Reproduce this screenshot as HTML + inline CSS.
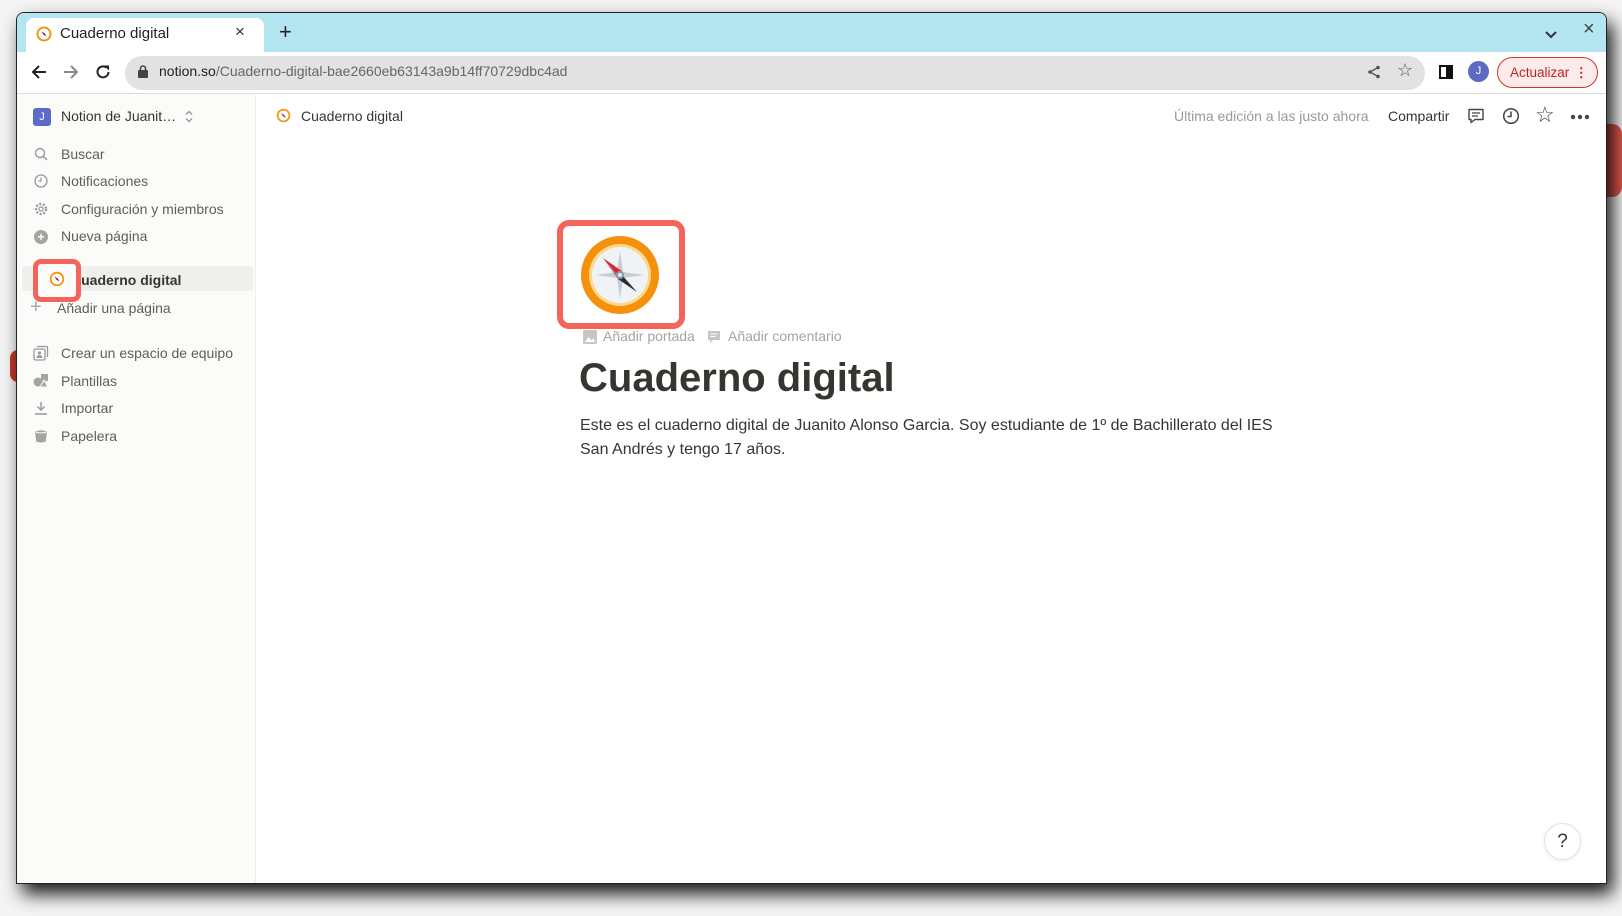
<!DOCTYPE html>
<html><head><meta charset="utf-8"><style>
*{margin:0;padding:0;box-sizing:border-box}
body{width:1622px;height:916px;background:#f4f4f4;position:relative;overflow:hidden;font-family:"Liberation Sans",sans-serif}
.a{position:absolute}
.win{left:16px;top:12px;width:1591px;height:872px;background:#fff;border:1px solid #222;border-radius:8px 8px 0 0;overflow:hidden;box-shadow:6px 10px 18px rgba(0,0,0,.9)}
.tabbar{left:0;top:0;width:100%;height:39px;background:#b4e6f1}
.tab{left:9px;top:5px;width:238px;height:34px;background:#fff;border-radius:8px 8px 0 0}
.t{white-space:nowrap}
.side{left:0;top:81px;width:239px;height:800px;background:#fbfbfa;border-right:1px solid #efefee}
.si{font-size:14px;color:#5f5e5b}
</style></head><body>
<div class="a" style="left:1607px;top:124px;width:15px;height:73px;background:#e0574b;border-radius:0 10px 10px 0"></div>
<div class="a" style="left:10px;top:350px;width:8px;height:32px;background:#c0392b;border-radius:8px 0 0 8px"></div>
<div class="a win">
 <div class="a tabbar"></div>
 <div class="a tab"></div>
 <svg class="a" style="left:19px;top:13px" width="16" height="16" viewBox="0 0 16 16"><circle cx="8" cy="8" r="6.5" fill="#fff" stroke="#f5940f" stroke-width="2"/><path d="M5.5 5.5 L8.6 7.4 L10.5 10.5 L7.4 8.6Z" fill="#333"/><path d="M5.5 5.5 L8.6 7.4 L7.4 8.6Z" fill="#d8223f"/></svg>
 <div class="a t" style="left:43px;top:12px;font-size:15px;color:#222">Cuaderno digital</div>
 <div class="a t" style="left:218px;top:9px;font-size:17px;color:#333">×</div>
 <div class="a t" style="left:262px;top:6px;font-size:22px;color:#222">+</div>
 <svg class="a" style="left:1528px;top:18px" width="12" height="8" viewBox="0 0 12 8"><path d="M1 1l5 5 5-5" stroke="#333" stroke-width="2" fill="none"/></svg>
 <div class="a t" style="left:1566px;top:5px;font-size:20px;color:#444">×</div>
 <svg class="a" style="left:13px;top:50px" width="18" height="18" viewBox="0 0 18 18"><path d="M16 9H3M9 3L3 9l6 6" stroke="#222" stroke-width="2" fill="none"/></svg>
 <svg class="a" style="left:45px;top:50px" width="18" height="18" viewBox="0 0 18 18"><path d="M2 9h13M9 3l6 6-6 6" stroke="#888" stroke-width="2" fill="none"/></svg>
 <svg class="a" style="left:77px;top:50px" width="18" height="18" viewBox="0 0 18 18"><path d="M14.5 9A5.5 5.5 0 1 1 12.5 4.6" stroke="#222" stroke-width="2" fill="none"/><path d="M10 2.5h5v5z" fill="#222"/></svg>
 <div class="a" style="left:108px;top:43px;width:1300px;height:34px;background:#e2e2e2;border-radius:17px"></div>
 <svg class="a" style="left:121px;top:52px" width="10" height="13" viewBox="0 0 10 13"><rect x="0" y="5" width="10" height="8" rx="1" fill="#444"/><path d="M2.5 5V3.5a2.5 2.5 0 0 1 5 0V5" stroke="#444" stroke-width="1.6" fill="none"/></svg>
 <div class="a t" style="left:142px;top:50px;font-size:14px;color:#222">notion.so<span style="color:#666">/Cuaderno-digital-bae2660eb63143a9b14ff70729dbc4ad</span></div>
 <svg class="a" style="left:1350px;top:52px" width="14" height="14" viewBox="0 0 14 14"><circle cx="11" cy="2.5" r="1.8" fill="#555"/><circle cx="3" cy="7" r="1.8" fill="#555"/><circle cx="11" cy="11.5" r="1.8" fill="#555"/><path d="M11 2.5L3 7l8 4.5" stroke="#555" stroke-width="1.4" fill="none"/></svg>
 <div class="a t" style="left:1380px;top:47px;font-size:18px;color:#555">☆</div>
 <div class="a" style="left:1422px;top:52px;width:14px;height:14px;border:2px solid #111;border-right:7px solid #111"></div>
 <div class="a" style="left:1451px;top:48px;width:21px;height:21px;border-radius:50%;background:#5c6bc0;color:#fff;font-size:11px;text-align:center;line-height:21px">J</div>
 <div class="a t" style="left:1480px;top:44px;width:101px;height:31px;border:1px solid #d93025;border-radius:16px;background:#fbeceb;color:#c5221f;font-size:13.5px;line-height:29px;padding-left:12px">Actualizar <span style="position:absolute;right:9px;top:0;font-weight:bold;letter-spacing:0">⋮</span></div>
 <div class="a" style="left:0;top:80px;width:100%;height:1px;background:#ddd"></div>

 <div class="a side"></div>
 <div class="a" style="left:16px;top:95px;width:18px;height:18px;border-radius:3px;background:#5a6bc8;color:#fff;font-size:11px;text-align:center;line-height:18px">J</div>
 <div class="a t" style="left:44px;top:95px;font-size:14px;color:#37352f">Notion de Juanit…</div>
 <svg class="a" style="left:167px;top:96px" width="10" height="15" viewBox="0 0 10 15"><path d="M2 5.5l3-3 3 3M2 9.5l3 3 3-3" stroke="#999" stroke-width="1.4" fill="none"/></svg>
 <svg class="a" style="left:17px;top:134px" width="14" height="14" viewBox="0 0 14 14"><circle cx="6" cy="6" r="4.5" stroke="#999" stroke-width="1.4" fill="none"/><path d="M9.3 9.3L13 13" stroke="#999" stroke-width="1.5"/></svg>
 <div class="a t si" style="left:44px;top:133px">Buscar</div>
 <svg class="a" style="left:17px;top:161px" width="14" height="14" viewBox="0 0 14 14"><circle cx="7" cy="7" r="6" stroke="#999" stroke-width="1.3" fill="none"/><path d="M7 3.5V7H4.5" stroke="#999" stroke-width="1.3" fill="none"/></svg>
 <div class="a t si" style="left:44px;top:160px">Notificaciones</div>
 <svg class="a" style="left:17px;top:189px" width="14" height="14" viewBox="0 0 14 14"><circle cx="7" cy="7" r="5" stroke="#999" stroke-width="2.4" stroke-dasharray="2 1.6" fill="none"/><circle cx="7" cy="7" r="2" stroke="#999" stroke-width="1.2" fill="none"/></svg>
 <div class="a t si" style="left:44px;top:188px">Configuración y miembros</div>
 <div class="a" style="left:17px;top:217px;width:14px;height:14px;border-radius:50%;background:#a5a4a1;color:#fff;font-size:12px;line-height:14px;text-align:center;font-weight:bold">+</div>
 <div class="a t si" style="left:44px;top:215px">Nueva página</div>

 <div class="a" style="left:5px;top:253px;width:231px;height:25px;background:#efefed;border-radius:3px"></div>
 <div class="a t" style="left:54px;top:259px;font-size:14px;color:#37352f;font-weight:bold">Cuaderno digital</div>
 <div class="a" style="left:16px;top:246px;width:48px;height:43px;border:5px solid #f4645a;border-radius:8px;background:#fbfbfa"></div>
 <svg class="a" style="left:32px;top:258px" width="16" height="16" viewBox="0 0 16 16"><circle cx="8" cy="8" r="6.3" fill="#fff" stroke="#f5940f" stroke-width="1.8"/><path d="M5.5 5.5 L8.6 7.4 L10.5 10.5 L7.4 8.6Z" fill="#333"/><path d="M5.5 5.5 L8.6 7.4 L7.4 8.6Z" fill="#d8223f"/></svg>
 <div class="a t" style="left:13px;top:283px;font-size:20px;color:#aaa">+</div>
 <div class="a t si" style="left:40px;top:287px">Añadir una página</div>

 <svg class="a" style="left:16px;top:332px" width="16" height="16" viewBox="0 0 16 16"><rect x="1" y="4" width="11" height="11" rx="1.5" stroke="#999" stroke-width="1.3" fill="none"/><path d="M4 1.5h9.5a1 1 0 0 1 1 1V12" stroke="#999" stroke-width="1.3" fill="none"/><circle cx="6.5" cy="8" r="1.6" fill="#999"/><path d="M3.5 13a3 3 0 0 1 6 0z" fill="#999"/></svg>
 <div class="a t si" style="left:44px;top:332px">Crear un espacio de equipo</div>
 <svg class="a" style="left:16px;top:360px" width="16" height="15" viewBox="0 0 16 15"><circle cx="5" cy="9" r="4.5" fill="#a5a4a1"/><path d="M8 1h7v7H8z" fill="#a5a4a1"/><path d="M11 7l4 7H7z" fill="#a5a4a1" stroke="#fbfbfa" stroke-width="1"/></svg>
 <div class="a t si" style="left:44px;top:360px">Plantillas</div>
 <svg class="a" style="left:17px;top:388px" width="14" height="14" viewBox="0 0 14 14"><path d="M7 1v8M3.5 5.5L7 9l3.5-3.5M1 13h12" stroke="#999" stroke-width="1.4" fill="none"/></svg>
 <div class="a t si" style="left:44px;top:387px">Importar</div>
 <svg class="a" style="left:17px;top:416px" width="14" height="14" viewBox="0 0 14 14"><path d="M1 2.5Q7 0 13 2.5L11.8 12.5Q7 14.5 2.2 12.5Z" fill="#a5a4a1"/><path d="M1.5 3Q7 5 12.5 3" stroke="#fbfbfa" stroke-width="1" fill="none"/></svg>
 <div class="a t si" style="left:44px;top:415px">Papelera</div>

 <!-- header -->
 <svg class="a" style="left:259px;top:95px" width="15" height="15" viewBox="0 0 16 16"><circle cx="8" cy="8" r="6.3" fill="#fff" stroke="#f5940f" stroke-width="1.8"/><path d="M5.5 5.5 L8.6 7.4 L10.5 10.5 L7.4 8.6Z" fill="#333"/><path d="M5.5 5.5 L8.6 7.4 L7.4 8.6Z" fill="#d8223f"/></svg>
 <div class="a t" style="left:284px;top:95px;font-size:14px;color:#37352f">Cuaderno digital</div>
 <div class="a t" style="left:1157px;top:95px;font-size:14px;color:#9b9a97">Última edición a las justo ahora</div>
 <div class="a t" style="left:1371px;top:95px;font-size:14px;color:#37352f">Compartir</div>
 <svg class="a" style="left:1450px;top:94px" width="18" height="18" viewBox="0 0 18 18"><path d="M2 2.5h14v10H8l-4 3v-3H2z" stroke="#444" stroke-width="1.4" fill="none" stroke-linejoin="round"/><path d="M5 6h8M5 9h6" stroke="#444" stroke-width="1.3"/></svg>
 <svg class="a" style="left:1485px;top:94px" width="18" height="18" viewBox="0 0 18 18"><circle cx="9" cy="9" r="7.3" stroke="#444" stroke-width="1.5" fill="none"/><path d="M9 4.5V9.5H5.5" stroke="#444" stroke-width="1.5" fill="none"/></svg>
 <div class="a t" style="left:1518px;top:89px;font-size:22px;color:#444">☆</div>
 <svg class="a" style="left:1553px;top:101px" width="20" height="6" viewBox="0 0 20 6"><circle cx="3" cy="3" r="2.2" fill="#444"/><circle cx="10" cy="3" r="2.2" fill="#444"/><circle cx="17" cy="3" r="2.2" fill="#444"/></svg>

 <!-- page -->
 <div class="a" style="left:540px;top:207px;width:128px;height:109px;border:6px solid #f4645a;border-radius:12px"></div>
 <svg class="a" style="left:563px;top:222px" width="80" height="80" viewBox="0 0 80 80">
  <circle cx="40" cy="40" r="39" fill="#f4900c"/><circle cx="40" cy="40" r="31" fill="#fdd888"/><circle cx="40" cy="40" r="28" fill="#f0f3f6"/>
  <path d="M40 16L43 37L64 40L43 43L40 64L37 43L16 40L37 37Z" fill="#c5ccd4"/>
  <path d="M23 23L42 36L38 40Z" fill="#dd2e44"/><path d="M57 57L38 44L42 40Z" fill="#292f33"/><path d="M23 23L38 44L42 40Z" fill="#b5192e" opacity=".6"/>
  <circle cx="40" cy="40" r="4" fill="#8899a6"/><circle cx="40" cy="40" r="2" fill="#e1e8ed"/></svg>
 <svg class="a" style="left:566px;top:317px" width="14" height="14" viewBox="0 0 14 14"><rect width="14" height="14" rx="1.5" fill="#c7c6c4"/><path d="M2 12l3.5-5 3 3.5L10.5 8 12 12z" fill="#fff"/></svg>
 <div class="a t" style="left:586px;top:315px;font-size:14px;color:#a5a4a1">Añadir portada</div>
 <svg class="a" style="left:690px;top:317px" width="14" height="14" viewBox="0 0 14 14"><path d="M1 1h12v9H6l-3 3v-3H1z" fill="#c7c6c4"/><path d="M3.5 4h7M3.5 6.5h5" stroke="#fff" stroke-width="1.1"/></svg>
 <div class="a t" style="left:711px;top:315px;font-size:14px;color:#a5a4a1">Añadir comentario</div>
 <div class="a t" style="left:562px;top:343px;font-size:40px;font-weight:bold;color:#37352f">Cuaderno digital</div>
 <div class="a" style="left:563px;top:401px;width:720px;font-size:16px;line-height:24px;color:#37352f">Este es el cuaderno digital de Juanito Alonso Garcia. Soy estudiante de 1º de Bachillerato del IES San Andrés y tengo 17 años.</div>
 <div class="a" style="left:1527px;top:810px;width:37px;height:37px;border-radius:50%;border:1px solid #e3e3e2;background:#fff;box-shadow:0 1px 4px rgba(0,0,0,.08);text-align:center;line-height:35px;font-size:19px;color:#37352f">?</div>
</div>
</body></html>
